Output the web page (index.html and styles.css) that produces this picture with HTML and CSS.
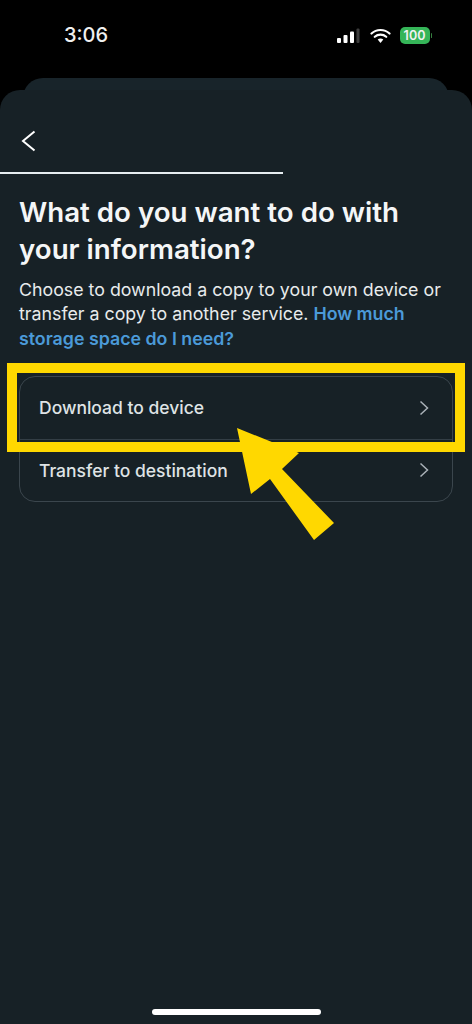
FILE: index.html
```html
<!DOCTYPE html>
<html lang="en">
<head>
<meta charset="utf-8">
<title>What do you want to do with your information?</title>
<link rel="stylesheet" href="styles.css">
</head>
<body>
<div class="phone">
  <header class="status">
    <span class="time">3:06</span>
    <div class="status-icons">
      <svg class="signal" width="24" height="16" viewBox="0 0 24 16"><rect x="0" y="10" width="4" height="5" rx="1" fill="#fff"/><rect x="6.5" y="7" width="4" height="8" rx="1" fill="#fff"/><rect x="13" y="3.500" width="4" height="11.500" rx="1" fill="#fff"/><rect x="19.500" y="0.500" width="3" height="14.500" rx="1" fill="#3c3c3c"/></svg>
      <svg class="wifi" width="21" height="16" viewBox="0 0 21 16"><path d="M1.500 5.500C6.500 0.800 14.500 0.800 19.500 5.500M4.800 8.800C7.900 6 13.100 6 16.200 8.800" fill="none" stroke="#fff" stroke-width="2.200" stroke-linecap="round"/><path d="M7.700 11.500C9.300 10.200 11.700 10.200 13.300 11.500L10.500 15Z" fill="#fff"/></svg>
      <div class="battery"><span class="battery-level">100</span><i class="battery-cap"></i></div>
    </div>
  </header>
  <div class="sheet-back"></div>
  <main class="sheet">
    <button class="back" aria-label="Back">
      <svg width="16" height="22" viewBox="0 0 16 22"><path d="M13.500 1.500L2 11l11.500 9.500" fill="none" stroke="#fff" stroke-width="2"/></svg>
    </button>
    <div class="progress"></div>
    <section class="content">
      <h1 class="title">What do you want to do with your information?</h1>
      <p class="desc">Choose to download a copy to your own device or transfer a copy to another service. <a class="link">How much storage space do I need?</a></p>
      <ul class="options">
        <li class="option"><span>Download to device</span><svg width="12" height="16" viewBox="0 0 12 16"><path d="M2.500 1.500L9.500 8l-7 6.500" fill="none" stroke="#aab2b8" stroke-width="1.500"/></svg></li>
        <li class="option"><span>Transfer to destination</span><svg width="12" height="16" viewBox="0 0 12 16"><path d="M2.500 1.500L9.500 8l-7 6.500" fill="none" stroke="#aab2b8" stroke-width="1.500"/></svg></li>
      </ul>
    </section>
    <div class="home-bar"></div>
  </main>
  <div class="highlight"></div>
  <svg class="arrow" width="110" height="125" viewBox="0 0 110 125"><polygon points="2,3 64,28 47,44 99,98 79,115 35,54 16,69" fill="#ffd800"/></svg>
</div>
</body>
</html>
```

FILE: styles.css
```css
* { box-sizing: border-box; }
html, body { margin: 0; padding: 0; background: #000; }
.phone {
  position: relative;
  width: 472px;
  height: 1024px;
  overflow: hidden;
  background: #000;
  font-family: Inter, "Liberation Sans", sans-serif;
  color: #fff;
  display: flex;
  flex-direction: column;
}
.status {
  height: 78px;
  flex: none;
  display: flex;
  justify-content: space-between;
  align-items: flex-start;
  padding: 23px 40px 0 64px;
}
.time { font-size: 20px; line-height: 24px; font-weight: 500; color: #f0f0f0; }
.status-icons { display: flex; align-items: center; gap: 9px; margin-top: 4px; }
.signal, .wifi { display: block; }
.signal { margin-left: 1px; }
.battery { display: flex; align-items: center; gap: 1px; }
.battery-level {
  width: 30px;
  height: 17px;
  border-radius: 5px;
  background: #35b558;
  font-size: 12.500px;
  line-height: 17px;
  font-weight: 600;
  text-align: center;
  color: #f2f2f2;
}
.battery-cap { width: 1.500px; height: 5px; background: #35803f; border-radius: 1px; }
.sheet-back {
  height: 40px;
  margin: 0 23px -28px;
  flex: none;
  background: #18242a;
  border-radius: 20px 20px 0 0;
}
.sheet {
  position: relative;
  z-index: 1;
  flex: 1;
  background: #172126;
  border-radius: 20px 20px 0 0;
  display: flex;
  flex-direction: column;
}
.back {
  display: block;
  width: 16px;
  height: 22px;
  padding: 0;
  margin: 40px 0 0 21px;
  background: none;
  border: 0;
}
.back svg { display: block; }
.progress { width: 283px; height: 2px; margin-top: 20px; background: #e6edf0; }
.content { padding: 0 19px; }
.title {
  margin: 20px 0 0;
  font-size: 27.700px;
  line-height: 37px;
  font-weight: 600;
  color: #f4f6f7;
}
.desc {
  margin: 9.500px 0 0;
  font-size: 17.800px;
  line-height: 24.500px;
  font-weight: 400;
  color: #e8ebec;
}
.link { font-weight: 600; color: #4b9ad8; }
.options {
  list-style: none;
  margin: 24.500px 0 0;
  padding: 0;
  width: 434px;
  border: 1px solid #3b464d;
  border-radius: 16px;
}
.option {
  height: 62px;
  padding: 0 22px 0 19px;
  display: flex;
  justify-content: space-between;
  align-items: center;
  font-size: 17.500px;
  font-weight: 500;
  color: #dfe3e5;
}
.option + .option { border-top: 1px solid #333e45; }
.home-bar {
  position: absolute;
  left: 152px;
  bottom: 9px;
  width: 169px;
  height: 6px;
  border-radius: 3px;
  background: #fff;
}
.highlight {
  position: absolute;
  z-index: 2;
  left: 7px;
  top: 363px;
  width: 458px;
  height: 89px;
  border: 10px solid #ffd800;
}
.arrow {
  position: absolute;
  z-index: 3;
  left: 235px;
  top: 425px;
}
```
